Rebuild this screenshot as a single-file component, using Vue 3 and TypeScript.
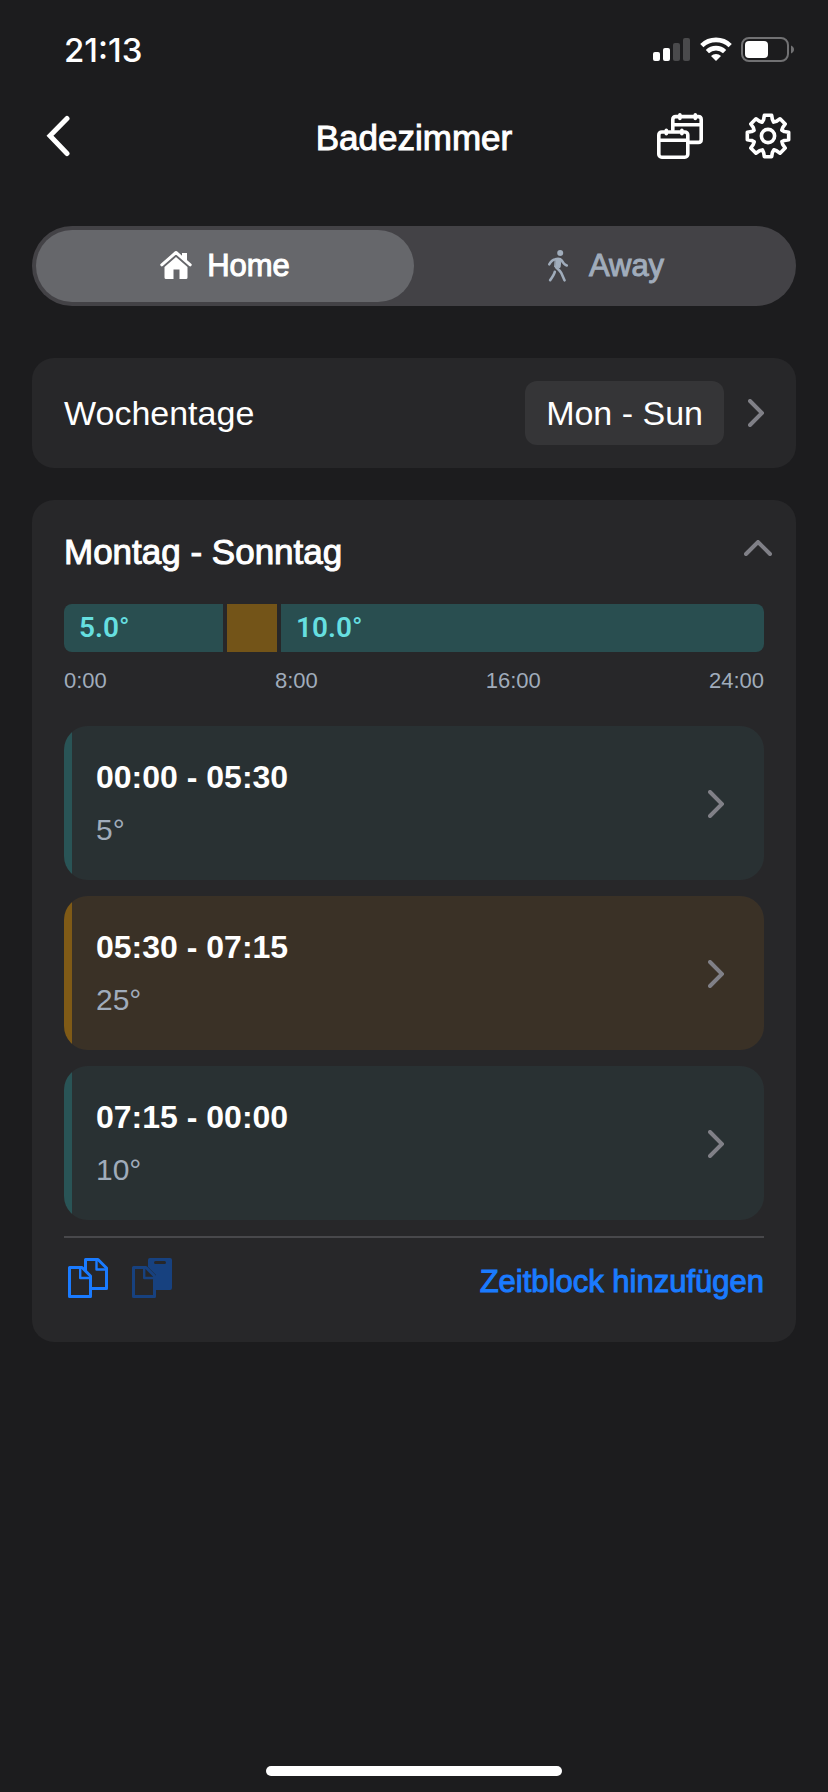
<script setup lang="ts">
import { computed, ref } from 'vue'

type Tone = 'cool' | 'warm'

interface TimeBlock {
  from: string
  to: string
  minutes: number
  degrees: number
  tone: Tone
}

const mode = ref<'home' | 'away'>('home')
const expanded = ref(true)

const blocks: TimeBlock[] = [
  { from: '00:00', to: '05:30', minutes: 330, degrees: 5, tone: 'cool' },
  { from: '05:30', to: '07:15', minutes: 105, degrees: 25, tone: 'warm' },
  { from: '07:15', to: '00:00', minutes: 1005, degrees: 10, tone: 'cool' },
]

const ticks = ['0:00', '8:00', '16:00', '24:00']

const gearPath = computed(() => {
  const corners: [number, number][] = [
    [-15, 17],
    [-10, 21],
    [10, 21],
    [15, 17],
    [22, 15],
  ]
  const points: string[] = []
  for (let tooth = 0; tooth < 8; tooth++) {
    for (const [offset, radius] of corners) {
      const angle = ((tooth * 45 + offset) * Math.PI) / 180
      points.push(`${(23 + radius * Math.sin(angle)).toFixed(2)} ${(23 - radius * Math.cos(angle)).toFixed(2)}`)
    }
  }
  return `M${points.join('L')}Z`
})
</script>

<template>
  <div class="screen">
    <div class="status">
      <span class="clock">21:13</span>
      <div class="indicators">
        <svg width="38" height="26" viewBox="0 0 38 26" fill="#fff" aria-hidden="true">
          <rect x="0" y="15" width="7" height="9" rx="2" />
          <rect x="10" y="11" width="7" height="13" rx="2" />
          <rect x="20" y="6" width="7" height="18" rx="2" fill="#4a4a4c" />
          <rect x="30" y="1" width="7" height="23" rx="2" fill="#4a4a4c" />
        </svg>
        <svg width="32" height="26" viewBox="0 0 32 26" fill="none" stroke="#fff" stroke-width="4.6" aria-hidden="true">
          <path d="M1.8 8.6a20.4 20.4 0 0 1 28.4 0" />
          <path d="M7.4 14.6a12.4 12.4 0 0 1 17.2 0" />
          <path d="M11 19a7.2 7.2 0 0 1 10 0l-5 5Z" fill="#fff" stroke="none" />
        </svg>
        <svg width="54" height="26" viewBox="0 0 54 26" aria-hidden="true">
          <rect x="1" y="1" width="46" height="23" rx="7" fill="none" stroke="#717173" stroke-width="2" />
          <rect x="4" y="4" width="23" height="17" rx="4" fill="#fff" />
          <path d="M50 8.500c4 1.500 4 6.500 0 8Z" fill="#717173" />
        </svg>
      </div>
    </div>

    <header class="nav">
      <button class="icon-button back" type="button" aria-label="Zurück">
        <svg width="24" height="46" viewBox="0 0 24 46" fill="none" stroke="#fff" stroke-width="5" stroke-linecap="round" aria-hidden="true">
          <path d="M21 5.500 4 22.800 21 40.500" />
        </svg>
      </button>
      <h1 class="title">Badezimmer</h1>
      <div class="actions">
        <button class="icon-button" type="button" aria-label="Kalender">
          <svg width="46" height="46" viewBox="0 0 46 46" fill="none" stroke="#fff" stroke-width="3.600" stroke-linecap="round" stroke-linejoin="round" aria-hidden="true">
            <path d="M15.800 17V6.600q0-3 3-3h22.400q3 0 3 3v19.800q0 3-3 3H33" />
            <path d="M16 11.800h28M22.900 1.800v3.600M38.300 1.800v3.600" />
            <rect x="1.800" y="19" width="29" height="25.200" rx="3" />
            <path d="M2 27.200h28.600M9.300 17.200v3.600M24.900 17.200v3.600" />
          </svg>
        </button>
        <button class="icon-button" type="button" aria-label="Einstellungen">
          <svg width="46" height="46" viewBox="0 0 46 46" fill="none" stroke="#fff" stroke-width="3.600" stroke-linejoin="round" aria-hidden="true">
            <path :d="gearPath" />
            <circle cx="23" cy="23" r="6.600" />
          </svg>
        </button>
      </div>
    </header>

    <main class="content">
      <div class="segmented">
        <button class="segment" :class="{ active: mode === 'home' }" type="button" :aria-pressed="mode === 'home'" @click="mode = 'home'">
          <svg width="32" height="32" viewBox="0 0 32 32" fill="currentColor" aria-hidden="true">
            <path d="M1.800 14.800 16 2.500l14.200 12.300" fill="none" stroke="currentColor" stroke-width="3" stroke-linecap="round" stroke-linejoin="round" />
            <path d="M22 3h5v8l-5-4Z" />
            <path d="M16 7 27.500 17v10.500q0 1.500-1.500 1.500h-6.500v-9.500h-6V29H6q-1.500 0-1.500-1.500V17Z" />
          </svg>
          <span>Home</span>
        </button>
        <button class="segment" :class="{ active: mode === 'away' }" type="button" :aria-pressed="mode === 'away'" @click="mode = 'away'">
          <svg width="32" height="32" viewBox="0 0 32 32" fill="none" stroke="currentColor" stroke-width="2.600" stroke-linecap="round" stroke-linejoin="round" aria-hidden="true">
            <circle cx="18.200" cy="3" r="3" fill="currentColor" stroke="none" />
            <path d="M7.300 14.300q2-4.300 6-5.100 4.600-1.200 6.500 1.300 2.200 4.300 5 4.900" />
            <path d="M13.500 9.500h5.500l-1 8 -5-.5Z" fill="currentColor" stroke-width="1" />
            <path d="M14.300 17.500q4 3.500 5 5.500l3.200 7.300M12.800 21.800q-.6 3-4.600 8.300" />
          </svg>
          <span>Away</span>
        </button>
      </div>

      <button class="card weekdays" type="button">
        <span>Wochentage</span>
        <span class="weekdays-value">
          <span class="pill">Mon - Sun</span>
          <svg class="chevron" width="16" height="28" viewBox="0 0 16 28" aria-hidden="true">
            <path d="M2 2 14 14 2 26" />
          </svg>
        </span>
      </button>

      <section class="card schedule">
        <button class="schedule-head" type="button" :aria-expanded="expanded" @click="expanded = !expanded">
          <span>Montag - Sonntag</span>
          <svg class="chevron up" width="28" height="16" viewBox="0 0 28 16" aria-hidden="true">
            <path d="M2 14 14 2l12 12" />
          </svg>
        </button>

        <div class="timeline">
          <div v-for="block in blocks" :key="block.from" class="span" :class="block.tone" :style="{ flexGrow: block.minutes }">
            <template v-if="block.tone === 'cool'">{{ block.degrees.toFixed(1) }}<span class="unit">°</span></template>
          </div>
        </div>
        <div class="ticks">
          <span v-for="tick in ticks" :key="tick">{{ tick }}</span>
        </div>

        <div v-if="expanded" class="blocks">
          <button v-for="block in blocks" :key="block.from" class="block" :class="block.tone" type="button">
            <span class="block-text">
              <strong>{{ block.from }} - {{ block.to }}</strong>
              <span class="degrees">{{ block.degrees }}°</span>
            </span>
            <svg class="chevron" width="16" height="28" viewBox="0 0 16 28" aria-hidden="true">
              <path d="M2 2 14 14 2 26" />
            </svg>
          </button>
        </div>

        <footer class="footer">
          <div class="tools">
            <button class="icon-button" type="button" aria-label="Kopieren">
              <svg width="40" height="40" viewBox="0 0 40 40" fill="none" stroke="#1a7bff" stroke-width="3" stroke-linejoin="round" aria-hidden="true">
                <path d="M17.500 13V1.500H30L38.500 10v20.500H24" />
                <path d="M28.500 2v9.500H38" stroke-width="2.400" />
                <path d="M1.500 9.500H14L22.500 18v20.500h-21Z" />
                <path d="M12.200 10v10H22" stroke-width="2.400" />
              </svg>
            </button>
            <button class="icon-button" type="button" aria-label="Einfügen" disabled>
              <svg width="40" height="40" viewBox="0 0 40 40" fill="none" stroke="#17417f" stroke-width="3" stroke-linejoin="round" aria-hidden="true">
                <path d="M18 0h20q2 0 2 2v28q0 2-2 2H24V17l-8-8V2q0-2 2-2Z" fill="#17417f" stroke="none" />
                <path d="M23.500 4.500h9" stroke="#272729" stroke-linecap="round" />
                <path d="M1.500 9.500H14L22.500 18v20.500h-21Z" fill="#272729" />
                <path d="M12.200 10v10H22" stroke-width="2.400" />
              </svg>
            </button>
          </div>
          <button class="add" type="button">Zeitblock hinzufügen</button>
        </footer>
      </section>
    </main>

    <div class="home-indicator"></div>
  </div>
</template>

<style>
body {
  background: #1c1c1e;
}
</style>

<style scoped>
.screen {
  box-sizing: border-box;
  min-height: 100vh;
  display: flex;
  flex-direction: column;
  padding-bottom: 16px;
  background: #1c1c1e;
  color: #fff;
  font-family: "Liberation Sans", Arial, sans-serif;
  font-size: 34px;
  line-height: 40px;
}

button {
  margin: 0;
  padding: 0;
  border: 0;
  background: none;
  color: inherit;
  font: inherit;
  text-align: left;
  cursor: pointer;
}

svg {
  display: block;
  flex: none;
}

.status {
  display: flex;
  justify-content: space-between;
  align-items: center;
  height: 100px;
  padding: 0 33px 0 64px;
}

.clock {
  font-family: Inter, sans-serif;
  font-size: 33px;
  font-weight: 500;
}

.indicators {
  display: flex;
  gap: 9px;
}

.nav {
  display: grid;
  grid-template-columns: 1fr auto 1fr;
  align-items: start;
  height: 113px;
  box-sizing: border-box;
  padding: 13px 37px 0;
}

.back {
  justify-self: start;
  padding-left: 9px;
}

.title {
  margin: 0;
  font-size: 35px;
  font-weight: 400;
  line-height: 50px;
  -webkit-text-stroke: 1px currentColor;
}

.actions {
  display: flex;
  justify-content: flex-end;
  gap: 42px;
}

.content {
  flex: 1;
  display: flex;
  flex-direction: column;
  padding: 13px 32px;
}

.segmented {
  display: flex;
  margin-bottom: 52px;
  padding: 4px;
  border-radius: 40px;
  background: #434246;
}

.segment {
  flex: 1;
  display: flex;
  justify-content: center;
  align-items: center;
  gap: 15px;
  height: 72px;
  border-radius: 36px;
  color: #a0acbb;
  font-size: 31px;
  line-height: 42px;
  -webkit-text-stroke: 1px currentColor;
}

.segment.active {
  background: #66676b;
  color: #fff;
}

.card {
  border-radius: 22px;
  background: #272729;
}

.weekdays {
  display: flex;
  justify-content: space-between;
  align-items: center;
  height: 110px;
  margin-bottom: 32px;
  padding: 0 32px;
}

.weekdays-value {
  display: flex;
  align-items: center;
  gap: 24px;
}

.pill {
  padding: 12px 21px;
  border-radius: 12px;
  background: #353537;
}

.chevron {
  fill: none;
  stroke: #808087;
  stroke-width: 4;
  stroke-linecap: round;
  stroke-linejoin: miter;
}

.schedule {
  padding: 24px 32px 36px;
}

.schedule-head {
  display: flex;
  justify-content: space-between;
  align-items: center;
  width: 100%;
  height: 56px;
  margin-bottom: 24px;
  font-size: 35px;
  -webkit-text-stroke: 1px currentColor;
}

.up {
  margin: 0 -8px 8px 0;
}

.timeline {
  display: flex;
  gap: 4px;
  height: 48px;
  border-radius: 8px;
  overflow: hidden;
}

.span {
  flex-basis: 0;
  width: 0;
  box-sizing: border-box;
  text-indent: 15px;
  color: #66dfe0;
  font-family: Roboto, sans-serif;
  font-size: 28px;
  font-weight: 600;
  line-height: 48px;
  white-space: nowrap;
}

.unit {
  font-weight: 400;
}

.span.cool {
  background: #294e50;
}

.span.warm {
  background: #735418;
}

.ticks {
  display: flex;
  justify-content: space-between;
  margin: 17px 0 33px;
  color: #a0acbb;
  font-size: 22px;
  line-height: 24px;
}

.blocks {
  display: flex;
  flex-direction: column;
  gap: 16px;
  margin-bottom: 16px;
}

.block {
  display: flex;
  justify-content: space-between;
  align-items: center;
  padding: 31px 40px 30px 32px;
  border-radius: 24px;
}

.block.cool {
  background: linear-gradient(to right, #295456 8px, #293133 8px);
}

.block.warm {
  background: linear-gradient(to right, #7f5a16 8px, #3a3126 8px);
}

.block-text {
  display: flex;
  flex-direction: column;
  gap: 13px;
  font-size: 32px;
}

.degrees {
  color: #a0acbb;
  font-size: 30px;
}

.footer {
  display: flex;
  justify-content: space-between;
  align-items: flex-start;
  padding-top: 20px;
  border-top: 2px solid #48484b;
}

.tools {
  display: flex;
  gap: 24px;
  padding-left: 4px;
}

.add {
  color: #1a7bff;
  font-size: 31px;
  line-height: 48px;
  -webkit-text-stroke: 1px currentColor;
}

.home-indicator {
  align-self: center;
  width: 296px;
  height: 10px;
  border-radius: 5px;
  background: #fff;
}
</style>
